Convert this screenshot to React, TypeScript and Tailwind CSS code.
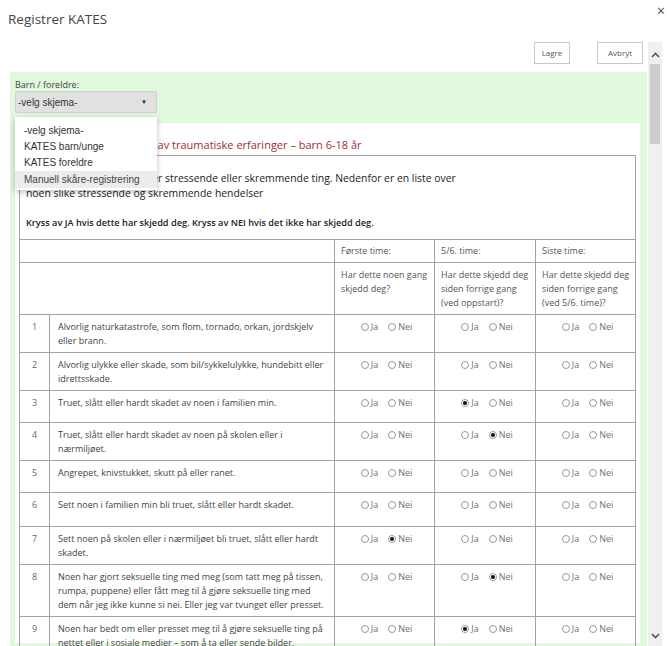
import React from 'react'

type Row = {
  nr: number
  lines: string[]
  svar: [string, string, string]
}

const ROWS: Row[] = [
  { nr: 1, lines: ['Alvorlig naturkatastrofe, som flom, tornado, orkan, jordskjelv', 'eller brann.'], svar: ['', '', ''] },
  { nr: 2, lines: ['Alvorlig ulykke eller skade, som bil/sykkelulykke, hundebitt eller', 'idrettsskade.'], svar: ['', '', ''] },
  { nr: 3, lines: ['Truet, slått eller hardt skadet av noen i familien min.'], svar: ['', 'ja', ''] },
  { nr: 4, lines: ['Truet, slått eller hardt skadet av noen på skolen eller i', 'nærmiljøet.'], svar: ['', 'nei', ''] },
  { nr: 5, lines: ['Angrepet, knivstukket, skutt på eller ranet.'], svar: ['', '', ''] },
  { nr: 6, lines: ['Sett noen i familien min bli truet, slått eller hardt skadet.'], svar: ['', '', ''] },
  { nr: 7, lines: ['Sett noen på skolen eller i nærmiljøet bli truet, slått eller hardt', 'skadet.'], svar: ['nei', '', ''] },
  {
    nr: 8,
    lines: [
      'Noen har gjort seksuelle ting med meg (som tatt meg på tissen,',
      'rumpa, puppene) eller fått meg til å gjøre seksuelle ting med',
      'dem når jeg ikke kunne si nei. Eller jeg var tvunget eller presset.',
    ],
    svar: ['', 'nei', ''],
  },
  {
    nr: 9,
    lines: [
      'Noen har bedt om eller presset meg til å gjøre seksuelle ting på',
      'nettet eller i sosiale medier – som å ta eller sende bilder.',
    ],
    svar: ['', 'ja', ''],
  },
]

const HEADERS: string[][] = [
  ['Har dette noen gang', 'skjedd deg?'],
  ['Har dette skjedd deg', 'siden forrige gang', '(ved oppstart)?'],
  ['Har dette skjedd deg', 'siden forrige gang', '(ved 5/6. time)?'],
]

const Radio = ({ on, label }: { on: boolean; label: string }) => (
  <span className="inline-flex items-center">
    <span className="w-[8px] h-[8px] rounded-full border border-[#999] bg-white flex items-center justify-center">
      {on && <span className="w-[4px] h-[4px] rounded-full bg-[#111]" />}
    </span>
    <span className="ml-[2px] text-[#6f6f6f]">{label}</span>
  </span>
)

const JaNei = ({ v }: { v: string }) => (
  <div className="flex justify-center gap-[10px] pl-[4px]">
    <Radio on={v === 'ja'} label="Ja" />
    <Radio on={v === 'nei'} label="Nei" />
  </div>
)

const Chevron = ({ up }: { up?: boolean }) => (
  <svg width="9" height="6" viewBox="0 0 9 6" className={up ? '' : 'rotate-180'}>
    <path d="M1 5 L4.5 1.5 L8 5" fill="none" stroke="#555" strokeWidth="1.6" />
  </svg>
)

export default function App() {
  const cell = 'border border-[#a3a3a3] align-top'
  return (
    <div className="w-[670px] h-[646px] bg-white overflow-hidden font-['Open_Sans','Noto_Sans',sans-serif] text-[#333]">
      {/* Header */}
      <div className="h-[42px] flex items-start justify-between">
        <h1 className="pl-[8px] pt-[10px] text-[13.5px] leading-[18px] text-[#444]">Registrer KATES</h1>
        <span className="pr-[5px] pt-[3px] text-[14px] leading-[16px] text-[#444]">×</span>
      </div>

      <div className="flex h-[604px] pl-[10px]">
        <div className="w-[637px] flex flex-col">
          {/* Knapper */}
          <div className="flex justify-end gap-[27px] pr-[4px]">
            <button className="h-[22px] w-[36px] border border-[#c8c8c8] bg-white text-[8px] text-[#555]">Lagre</button>
            <button className="h-[22px] w-[46px] border border-[#c8c8c8] bg-white text-[8px] text-[#555]">Avbryt</button>
          </div>

          <div className="mt-[8px] flex-1 bg-[#e0f8dc] pl-[5px] pr-[7px] pt-[7px]">
            <div className="text-[9px] leading-[12px] text-[#444]">Barn / foreldre:</div>
            <div className="relative w-[142px]">
              <div className="h-[22px] bg-[#e1e1e1] border border-[#d0d0d0] rounded-[2px] flex items-center justify-between pl-[2px] pr-[9px] font-['Liberation_Sans',Arial,sans-serif] text-[10px] text-[#333]">
                <span>-velg skjema-</span>
                <span className="text-[6px] text-[#222]">▼</span>
              </div>
              <div className="absolute left-0 top-full mt-[4px] w-[142px] z-10 bg-white shadow-[0_2px_6px_rgba(0,0,0,0.25)] pt-[6px] pb-[2px] font-['Liberation_Sans',Arial,sans-serif] text-[10px] text-[#333]">
                <div className="h-[16px] leading-[16px] px-[9px]">-velg skjema-</div>
                <div className="h-[16px] leading-[16px] px-[9px]">KATES barn/unge</div>
                <div className="h-[16px] leading-[16px] px-[9px]">KATES foreldre</div>
                <div className="h-[17px] leading-[17px] px-[9px] bg-[#ececec] text-[#444]">Manuell skåre-registrering</div>
              </div>
            </div>

            {/* Skjema */}
            <div className="mt-[10px] bg-white pl-[4px] pr-[5px] h-[520px]">
              <div className="pt-[14px] h-[32px] pl-[6px] text-[11px] leading-[16px] text-[#9e2f2f]">
                KATES-B 2.0 – Kartlegging av traumatiske erfaringer – barn 6-18 år
              </div>
              <table className="table-fixed border-collapse w-[616px] text-[9px] leading-[14px]">
                <colgroup>
                  <col className="w-[30px]" />
                  <col className="w-[285px]" />
                  <col className="w-[100px]" />
                  <col className="w-[101px]" />
                  <col className="w-[100px]" />
                </colgroup>
                <tbody>
                  <tr>
                    <td colSpan={5} className={`${cell} pl-[6px] pt-[15px] pb-[9px]`}>
                      <div className="text-[10.4px] leading-[15px] text-[#222]">
                        Mange barn og unge erfarer stressende eller skremmende ting. Nedenfor er en liste over
                        <br />
                        noen slike stressende og skremmende hendelser
                      </div>
                      <div className="mt-[14px] text-[9.2px] leading-[15px] font-semibold text-[#222]">
                        Kryss av JA hvis dette har skjedd deg. Kryss av NEI hvis det ikke har skjedd deg.
                      </div>
                    </td>
                  </tr>
                  <tr className="text-[#555]">
                    <td colSpan={2} className={`${cell} h-[22px]`} />
                    <td className={`${cell} px-[6px] pt-[4px] pb-[4px]`}>Første time:</td>
                    <td className={`${cell} px-[6px] pt-[4px] pb-[4px]`}>5/6. time:</td>
                    <td className={`${cell} px-[6px] pt-[4px] pb-[4px]`}>Siste time:</td>
                  </tr>
                  <tr className="text-[#555]">
                    <td colSpan={2} className={`${cell}`} />
                    {HEADERS.map((h, i) => (
                      <td key={i} className={`${cell} px-[6px] pt-[5px] pb-[4px] whitespace-nowrap`}>
                        {h.map((l, j) => (
                          <div key={j}>{l}</div>
                        ))}
                      </td>
                    ))}
                  </tr>
                  {ROWS.map(r => (
                    <tr key={r.nr}>
                      <td className={`${cell} ${r.nr === 6 ? 'h-[34px]' : 'h-[32px]'} pt-[5px] text-center text-[#666]`}>{r.nr}</td>
                      <td className={`${cell} px-[8px] pt-[5px] pb-[4px] text-[#444] whitespace-nowrap`}>
                        {r.lines.map((l, i) => (
                          <div key={i}>{l}</div>
                        ))}
                      </td>
                      {r.svar.map((v, i) => (
                        <td key={i} className={`${cell} pt-[5px]`}>
                          <JaNei v={v} />
                        </td>
                      ))}
                    </tr>
                  ))}
                </tbody>
              </table>
            </div>
          </div>
        </div>

        {/* Scrollbar */}
        <div className="ml-[1px] w-[14px] bg-[#f0f0f0] flex flex-col items-center">
          <div className="h-[22px] flex items-center justify-center pt-[4px]">
            <Chevron up />
          </div>
          <div className="w-[10px] h-[80px] bg-[#cdcdcd]" />
          <div className="flex-1" />
          <div className="h-[16px] flex items-center justify-center pb-[4px]">
            <Chevron />
          </div>
        </div>
      </div>
    </div>
  )
}
